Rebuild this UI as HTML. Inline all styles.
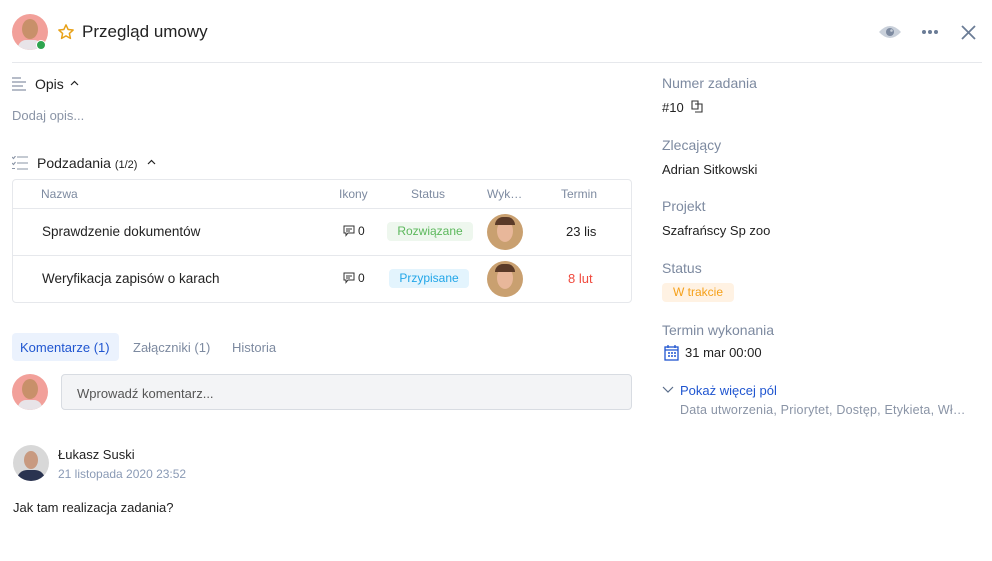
<!DOCTYPE html>
<html><head><meta charset="utf-8"><style>
*{margin:0;padding:0;box-sizing:border-box}
body{width:992px;height:561px;background:#fff;font-family:"Liberation Sans",sans-serif;color:#222;position:relative;overflow:hidden;font-size:13px}
.a{position:absolute;white-space:nowrap}
.av{position:absolute;border-radius:50%;overflow:hidden}
.lbl{color:#7d8aa0;font-size:14px}
.muted{color:#8a94a6}
.th{color:#7d8aa0;font-size:12px}
.pill{position:absolute;border-radius:4px;font-size:12px;text-align:center;line-height:19px}
</style></head><body>
<div class="av" style="left:12px;top:14px;width:36px;height:36px;background:#f2a09a">
<div style="position:absolute;left:10px;top:5px;width:16px;height:20px;border-radius:50%;background:#c8906a"></div>
<div style="position:absolute;left:6px;top:26px;width:24px;height:14px;border-radius:8px 8px 0 0;background:#e8e4e8"></div>
</div>
<div style="position:absolute;left:36px;top:40px;width:10px;height:10px;border-radius:50%;background:#2fa44f;border:1.5px solid #fff"></div>
<svg class="a" style="left:57px;top:23px" width="18" height="18" viewBox="0 0 24 24"><path d="M12 2.5l2.9 6.2 6.6.7-5 4.5 1.4 6.6L12 17.2l-5.9 3.3 1.4-6.6-5-4.5 6.6-.7z" fill="none" stroke="#e8a21a" stroke-width="2" stroke-linejoin="round"/></svg>
<div class="a" style="left:82px;top:22px;font-size:17px;color:#222">Przegląd umowy</div>
<svg class="a" style="left:878px;top:23px" width="24" height="18" viewBox="0 0 24 18"><path d="M1 9Q12-3 23 9Q12 21 1 9z" fill="#c9d0da"/><circle cx="12" cy="9" r="4" fill="#7d8aa0"/><circle cx="13.5" cy="7.5" r="1.3" fill="#c9d0da"/></svg>
<div class="a" style="left:922px;top:30px;width:4px;height:4px;border-radius:50%;background:#6b7c96;box-shadow:6px 0 #6b7c96,12px 0 #6b7c96"></div>
<svg class="a" style="left:961px;top:25px" width="15" height="15" viewBox="0 0 15 15"><path d="M1 1L14 14M14 1L1 14" stroke="#6b7c96" stroke-width="1.8"/></svg>
<div class="a" style="left:12px;top:62px;width:970px;height:1px;background:#e6e8ec"></div>

<svg class="a" style="left:12px;top:77px" width="16" height="14" viewBox="0 0 16 14"><path d="M0 1h9M0 5h14M0 9h11M0 13h14" stroke="#8a94a6" stroke-width="1.2"/></svg>
<div class="a" style="left:35px;top:76px;font-size:14px">Opis</div>
<svg class="a" style="left:70px;top:80px" width="9" height="6" viewBox="0 0 9 6"><path d="M1 5l3.5-3.5L8 5" fill="none" stroke="#222" stroke-width="1.2"/></svg>
<div class="a muted" style="left:12px;top:108px;font-size:13px">Dodaj opis...</div>

<svg class="a" style="left:12px;top:156px" width="16" height="14" viewBox="0 0 16 14"><path d="M5 1h11M5 7h11M5 13h11M0 1l1.5 1.5L3.5 0M0 7l1.5 1.5L3.5 6M0 12.5h3" stroke="#8a94a6" stroke-width="1.1" fill="none"/></svg>
<div class="a" style="left:37px;top:155px;font-size:14px">Podzadania <span style="font-size:11px">(1/2)</span></div>
<svg class="a" style="left:147px;top:159px" width="9" height="6" viewBox="0 0 9 6"><path d="M1 5l3.5-3.5L8 5" fill="none" stroke="#222" stroke-width="1.2"/></svg>

<div style="position:absolute;left:12px;top:179px;width:620px;height:124px;border:1px solid #e6e8ec;border-radius:4px"></div>
<div class="a" style="left:13px;top:208px;width:618px;height:1px;background:#e6e8ec"></div>
<div class="a" style="left:13px;top:255px;width:618px;height:1px;background:#e6e8ec"></div>
<div class="a th" style="left:41px;top:187px">Nazwa</div>
<div class="a th" style="left:339px;top:187px">Ikony</div>
<div class="a th" style="left:411px;top:187px">Status</div>
<div class="a th" style="left:487px;top:187px">Wyk…</div>
<div class="a th" style="left:561px;top:187px">Termin</div>

<div class="a" style="left:42px;top:224px;font-size:13.5px">Sprawdzenie dokumentów</div>
<div class="a" style="left:42px;top:271px;font-size:13.5px">Weryfikacja zapisów o karach</div>
<svg class="a" style="left:343px;top:225px" width="12" height="12" viewBox="0 0 12 12"><path d="M1 1h10v7H5l-2 2.5V8H1z M3 4h6M3 6h4" fill="none" stroke="#333" stroke-width="1"/></svg>
<div class="a" style="left:358px;top:224px;font-size:12px">0</div>
<svg class="a" style="left:343px;top:272px" width="12" height="12" viewBox="0 0 12 12"><path d="M1 1h10v7H5l-2 2.5V8H1z M3 4h6M3 6h4" fill="none" stroke="#333" stroke-width="1"/></svg>
<div class="a" style="left:358px;top:271px;font-size:12px">0</div>
<div class="pill" style="left:387px;top:222px;width:86px;background:#eef7ee;color:#5cb85c">Rozwiązane</div>
<div class="pill" style="left:389px;top:269px;width:80px;background:#e3f4fd;color:#22a6e8">Przypisane</div>
<div class="av" style="left:487px;top:214px;width:36px;height:36px;background:#c9a070"><div style="position:absolute;left:10px;top:6px;width:16px;height:22px;border-radius:50%;background:#e8b79a"></div><div style="position:absolute;left:8px;top:3px;width:20px;height:8px;border-radius:10px 10px 0 0;background:#5a3a28"></div></div>
<div class="av" style="left:487px;top:261px;width:36px;height:36px;background:#c9a070"><div style="position:absolute;left:10px;top:6px;width:16px;height:22px;border-radius:50%;background:#e8b79a"></div><div style="position:absolute;left:8px;top:3px;width:20px;height:8px;border-radius:10px 10px 0 0;background:#5a3a28"></div></div>
<div class="a" style="left:566px;top:224px;font-size:13px">23 lis</div>
<div class="a" style="left:568px;top:271px;font-size:13px;color:#f04a3e">8 lut</div>

<div class="a" style="left:12px;top:333px;width:107px;height:28px;background:#ebf2fd;border-radius:4px"></div>
<div class="a" style="left:20px;top:340px;font-size:13px;color:#1f55d0">Komentarze (1)</div>
<div class="a" style="left:133px;top:340px;font-size:13px;color:#7d8aa0">Załączniki (1)</div>
<div class="a" style="left:232px;top:340px;font-size:13px;color:#7d8aa0">Historia</div>

<div class="av" style="left:12px;top:374px;width:36px;height:36px;background:#f2a09a"><div style="position:absolute;left:10px;top:5px;width:16px;height:20px;border-radius:50%;background:#c8906a"></div><div style="position:absolute;left:6px;top:26px;width:24px;height:14px;border-radius:8px 8px 0 0;background:#e8e4e8"></div></div>
<div class="a" style="left:61px;top:374px;width:571px;height:36px;background:#f3f4f6;border:1px solid #d8dce2;border-radius:4px"></div>
<div class="a" style="left:77px;top:386px;font-size:13px;color:#555">Wprowadź komentarz...</div>

<div class="av" style="left:13px;top:445px;width:36px;height:36px;background:#d8d8d8"><div style="position:absolute;left:11px;top:6px;width:14px;height:18px;border-radius:50%;background:#c89a80"></div><div style="position:absolute;left:4px;top:25px;width:28px;height:14px;border-radius:10px 10px 0 0;background:#2a3350"></div></div>
<div class="a" style="left:58px;top:447px;font-size:13px">Łukasz Suski</div>
<div class="a" style="left:58px;top:467px;font-size:12px;color:#8a9ab5">21 listopada 2020 23:52</div>
<div class="a" style="left:13px;top:500px;font-size:13px">Jak tam realizacja zadania?</div>

<div class="a lbl" style="left:662px;top:75px">Numer zadania</div>
<div class="a" style="left:662px;top:100px;font-size:13px">#10</div>
<svg class="a" style="left:691px;top:100px" width="12" height="13" viewBox="0 0 12 13"><path d="M1 1h6v8H1zM4 4h7v8H4" fill="none" stroke="#333" stroke-width="1.1"/></svg>
<div class="a lbl" style="left:662px;top:137px">Zlecający</div>
<div class="a" style="left:662px;top:162px;font-size:13px">Adrian Sitkowski</div>
<div class="a lbl" style="left:662px;top:198px">Projekt</div>
<div class="a" style="left:662px;top:223px;font-size:13px">Szafrańscy Sp zoo</div>
<div class="a lbl" style="left:662px;top:260px">Status</div>
<div class="pill" style="left:662px;top:283px;width:72px;background:#fff2e3;color:#f5a019">W trakcie</div>
<div class="a lbl" style="left:662px;top:322px">Termin wykonania</div>
<svg class="a" style="left:664px;top:344px" width="15" height="17" viewBox="0 0 15 17"><rect x="1" y="3" width="13" height="13" fill="none" stroke="#1f55d0" stroke-width="1.3"/><path d="M1 6h13M4 1v3M11 1v3" stroke="#1f55d0" stroke-width="1.3"/><path d="M4 9h2M7 9h2M10 9h2M4 12h2M7 12h2M10 12h2" stroke="#1f55d0" stroke-width="1.5"/></svg>
<div class="a" style="left:685px;top:345px;font-size:13px">31 mar 00:00</div>
<svg class="a" style="left:662px;top:386px" width="12" height="8" viewBox="0 0 12 8"><path d="M1 1l5 5 5-5" fill="none" stroke="#5a6d8a" stroke-width="1.2"/></svg>
<div class="a" style="left:680px;top:383px;font-size:13px;color:#1f55d0">Pokaż więcej pól</div>
<div class="a" style="left:680px;top:403px;font-size:12.5px;color:#8a94a6;letter-spacing:0.2px">Data utworzenia, Priorytet, Dostęp, Etykieta, Wł…</div>
</body></html>
